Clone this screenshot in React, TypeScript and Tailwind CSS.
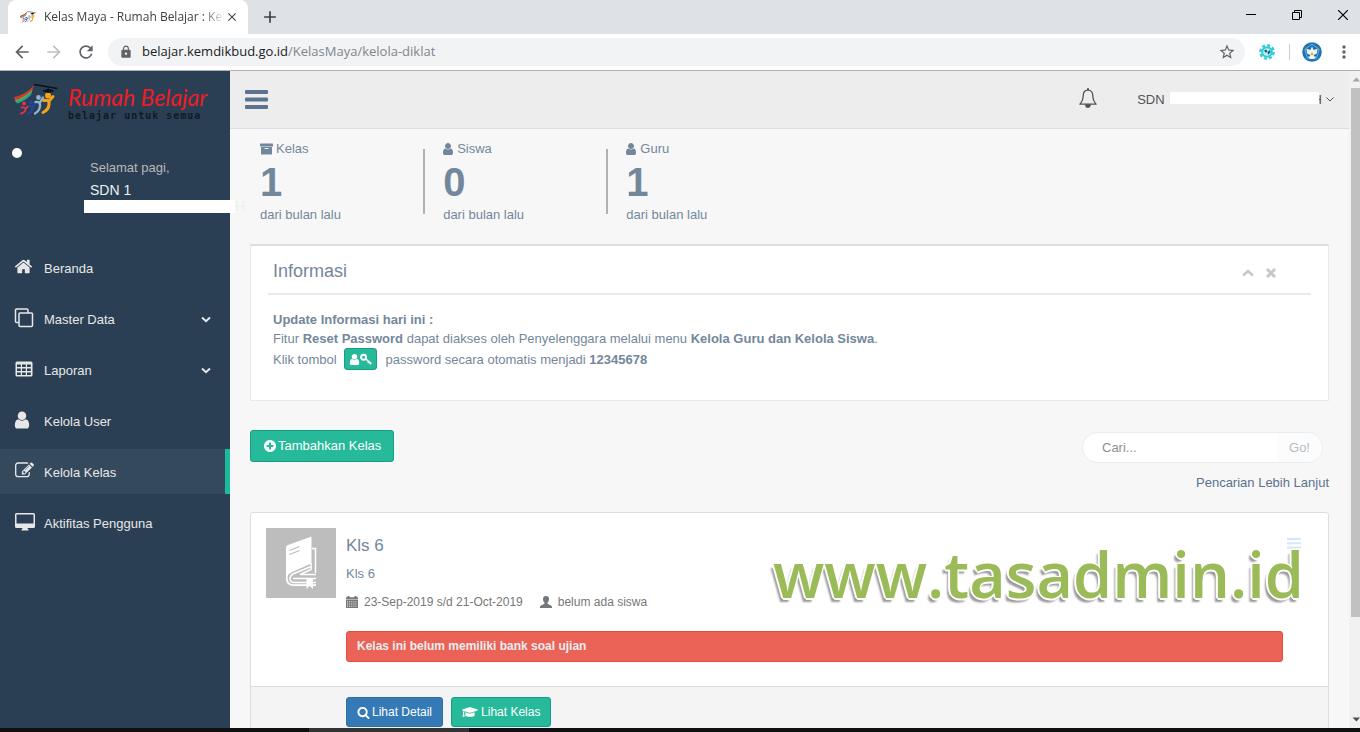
import React from "react";
import { FaGraduationCap } from "react-icons/fa";
import { MdArrowBack, MdArrowForward, MdRefresh, MdLock, MdStarBorder, MdClose, MdAdd, MdMoreVert } from "react-icons/md";

type IconProps = { className?: string };

const Fa = ({ d, className }: { d: string; className?: string }) => (
  <svg viewBox="0 0 1792 1792" fill="currentColor" aria-hidden="true" className={className}>
    <path d={d} />
  </svg>
);

const HOME =
  "M1472 992v480q0 26-19 45t-45 19h-384v-384h-256v384h-384q-26 0-45-19t-19-45v-480q0-1 .5-3t.5-3l575-474 575 474q1 2 1 6zm223-69l-62 74q-8 9-21 11h-3q-13 0-21-7l-692-577-692 577q-12 8-24 7-13-2-21-11l-62-74q-8-10-7-23.5t11-21.5l719-599q32-26 76-26t76 26l244 204v-195q0-14 9-23t23-9h192q14 0 23 9t9 23v408l219 182q10 8 11 21.5t-7 23.5z";
const USER =
  "M1536 1399q0 109-62.500 187t-150.500 78h-854q-88 0-150.500-78t-62.500-187q0-85 8.500-160.500t31.500-152 58.500-131 94-89 134.500-34.500q131 128 313 128t313-128q76 0 134.500 34.500t94 89 58.500 131 31.500 152 8.500 160.500zm-256-887q0 159-112.500 271.500t-271.500 112.500-271.500-112.500-112.500-271.500 112.500-271.500 271.500-112.500 271.500 112.500 112.500 271.500z";
const PLUS =
  "M1344 960v-128q0-26-19-45t-45-19h-256v-256q0-26-19-45t-45-19h-128q-26 0-45 19t-19 45v256h-256q-26 0-45 19t-19 45v128q0 26 19 45t45 19h256v256q0 26 19 45t45 19h128q26 0 45-19t19-45v-256h256q26 0 45-19t19-45zm320-64q0 209-103 385.500t-279.500 279.500-385.500 103-385.500-103-279.500-279.500-103-385.500 103-385.500 279.500-279.500 385.500-103 385.500 103 279.500 279.500 103 385.500z";
const EDIT =
  "M888 1184l116-116-152-152-116 116v56h96v96h56zm440-720q-16-16-33 1l-350 350q-17 17-1 33t33-1l350-350q17-17 1-33zm80 594v190q0 119-84.500 203.500t-203.500 84.500h-832q-119 0-203.500-84.500t-84.500-203.500v-832q0-119 84.500-203.500t203.500-84.500h832q63 0 117 25 15 7 18 23 3 17-9 29l-49 49q-14 14-32 8-23-6-45-6h-832q-66 0-113 47t-47 113v832q0 66 47 113t113 47h832q66 0 113-47t47-113v-126q0-13 9-22l64-64q15-15 35-7t20 29zm-96-738l288 288-672 672h-288v-288zm444 132l-92 92-288-288 92-92q28-28 68-28t68 28l152 152q28 28 28 68t-28 68z";
const SEARCH =
  "M1216 832q0-185-131.500-316.500t-316.500-131.500-316.500 131.500-131.500 316.500 131.500 316.500 316.500 131.500 316.500-131.500 131.500-316.500zm512 832q0 52-38 90t-90 38q-54 0-90-38l-343-342q-179 124-399 124-143 0-273.500-55.500t-225-150-150-225-55.500-273.500 55.500-273.500 150-225 225-150 273.500-55.500 273.500 55.500 225 150 150 225 55.500 273.500q0 220-124 399l343 343q37 37 37 90z";

const HomeIcon = () => <Fa d={HOME} className="-ml-px size-[19px]" />;
const UserMenuIcon = () => <Fa d={USER} className="-ml-[3px] size-5" />;
const EditIcon = () => <Fa d={EDIT} className="size-[19px]" />;

const CloneIcon = () => (
  <svg viewBox="0 0 20 20" fill="none" stroke="currentColor" strokeWidth="1.500" className="-ml-px size-5" aria-hidden="true">
    <rect x="5" y="5" width="13.500" height="13.500" rx="1" />
    <path d="M5 14.500H2.500A1 1 0 0 1 1.500 13.500V2A1 1 0 0 1 2.500 1H13A1 1 0 0 1 14 2V5" />
  </svg>
);

const TableIcon = () => (
  <svg viewBox="0 0 18 16" className="h-4 w-[18px]" aria-hidden="true">
    <rect x="0.500" y="0.500" width="17" height="15" rx="1.500" fill="currentColor" />
    <g fill="#2a3f54">
      {[3.5, 7.5, 11.5].map((y) => [2, 7, 12].map((x) => <rect key={`${x}-${y}`} x={x} y={y} width="3.800" height="2.500" />))}
    </g>
  </svg>
);

const DesktopIcon = () => (
  <svg viewBox="0 0 20 18" className="h-[18px] w-5" aria-hidden="true">
    <path
      fill="currentColor"
      fillRule="evenodd"
      d="M1.500 0h17A1.500 1.500 0 0 1 20 1.500v12a1.500 1.500 0 0 1-1.500 1.500H12.500q0 1 1 1.600V17.500H6.500V16.600q1-.6 1-1.600H1.500A1.500 1.500 0 0 1 0 13.500v-12A1.500 1.500 0 0 1 1.500 0zM1.500 1.500v9h17v-9z"
    />
  </svg>
);

const ArchiveIcon = () => (
  <svg viewBox="0 0 13 12" className="mr-[3px] h-3 w-[13px]" fill="currentColor" aria-hidden="true">
    <rect x="0" y="0.500" width="13" height="3" rx="0.500" />
    <path fillRule="evenodd" d="M1 4h11v7a.5.5 0 0 1-.5.5h-10A.5.5 0 0 1 1 11zM5 5a.5.5 0 0 0 0 1h3a.5.5 0 0 0 0-1z" />
  </svg>
);

const Chevron = ({ className }: IconProps) => (
  <svg viewBox="0 0 12 8" fill="none" stroke="currentColor" strokeWidth="2.400" className={className} aria-hidden="true">
    <path d="M1.200 1.500L6 6l4.800-4.500" />
  </svg>
);

const BarsIcon = () => (
  <svg viewBox="0 0 23 19" className="h-[19px] w-[23px]" fill="currentColor" aria-hidden="true">
    <rect y="0" width="23" height="4" rx="1" />
    <rect y="7.500" width="23" height="4" rx="1" />
    <rect y="15" width="23" height="4" rx="1" />
  </svg>
);

const BellIcon = () => (
  <svg viewBox="0 0 18 20" className="h-5 w-[18px]" fill="none" stroke="currentColor" strokeWidth="1.300" aria-hidden="true">
    <path d="M9 2.200C5.600 2.200 4.200 5 4.200 8c0 5-1.700 6.300-3.300 8.200h16.200C15.500 14.300 13.800 13 13.800 8c0-3-1.400-5.800-4.800-5.800z" strokeLinejoin="round" />
    <path d="M9 .3v2" strokeWidth="2" />
    <path d="M6.800 17a2.200 2.200 0 0 0 4.400 0z" fill="currentColor" />
  </svg>
);

const KeyIcon = () => (
  <svg viewBox="0 0 12 12" className="size-3" fill="none" stroke="currentColor" aria-hidden="true">
    <circle cx="3.600" cy="4.200" r="2.500" strokeWidth="1.900" />
    <path d="M5.600 5.800l5 4.200M7.800 9.900l1.600-1.900M9.800 11.300l1.500-1.700" strokeWidth="1.600" />
  </svg>
);

const CalendarIcon = () => (
  <svg viewBox="0 0 12 12" className="size-3" aria-hidden="true">
    <path fill="currentColor" d="M0 1.200h1.500V0h2v1.200h5V0h2v1.200H12v2.200H0zM0 4h12v8H0z" />
    <g fill="#fff" fillOpacity=".8">
      {[5.2, 7.4, 9.6].map((y) => [1, 3.1, 5.2, 7.3, 9.4].map((x) => <rect key={`${x}-${y}`} x={x} y={y} width="1.100" height="1.100" />))}
    </g>
  </svg>
);

const BustIcon = () => (
  <svg viewBox="0 0 12 12" className="size-3" fill="currentColor" aria-hidden="true">
    <path d="M6 0c2 0 3 1.300 3 3.100C9 4.800 8.300 6 7.500 6.700v1C8.500 8.500 12 9.200 12 10.800V12H0v-1.200C0 9.200 3.500 8.500 4.500 7.700v-1C3.700 6 3 4.800 3 3.100 3 1.300 4 0 6 0z" />
  </svg>
);

const BookThumb = () => (
  <svg viewBox="0 0 70 70" className="size-[70px] shrink-0 bg-[#bdbdbd]" aria-hidden="true">
    <path fill="#fff" d="M20 19Q20 18 22 17L45.500 8.500V35.500L26 44Q21 46.500 20 51z" />
    <path d="M23.500 22.500l10-4M23.500 26.500l10-4" stroke="#bdbdbd" strokeWidth="1.300" fill="none" />
    <path d="M46 20.500H49.500V45" stroke="#fff" strokeWidth="1.500" fill="none" />
    <path d="M20.800 45V51Q21 57 28 57.200H50" stroke="#fff" strokeWidth="1.800" fill="none" />
    <path d="M45 38.500L28 45.500Q23.500 47.500 24 51.500Q24.500 54.500 28 54.500H50" stroke="#fff" strokeWidth="1.500" fill="none" />
    <path d="M45 41.500L34 46.500H50M27 50.500H50" stroke="#fff" strokeWidth="1.500" fill="none" />
    <path d="M45.200 35V42" stroke="#fff" strokeWidth="1.300" />
    <path d="M40.500 50.500H47V61L43.700 57.800L40.500 61z" fill="#fff" />
  </svg>
);

const LogoMark = ({ className }: IconProps) => (
  <svg viewBox="0 0 44 34" className={className} aria-hidden="true">
    <path d="M0 14Q12 12 20 2L18.500 7Q10 16 1 17.500z" fill="#d9382c" />
    <path d="M1 17Q10 15 18.500 6.500L17.800 9.500Q10 18 2 19.500z" fill="#4caf50" />
    <path d="M2 19.500Q10 17.500 17.800 9.500L17 12Q11 18 3.500 20.500z" fill="#2a9bb5" />
    <g fill="none" strokeLinecap="round">
      <g stroke="#dc3545">
        <circle cx="10" cy="20.500" r="1" strokeWidth="2" />
        <path d="M7.500 24.500q4-.5 4 2t-4.500 4M11.500 25.500l3-2.500" strokeWidth="1.900" />
      </g>
      <g stroke="#27439c">
        <circle cx="17" cy="19" r="1.100" strokeWidth="2" />
        <path d="M15 23q4 0 3.500 3t-4.500 4.500M18.500 24l3-4" strokeWidth="2.200" />
      </g>
      <g stroke="#8fb4cf">
        <circle cx="24.500" cy="14.500" r="1.200" strokeWidth="2.400" />
        <path d="M21.500 19q5-1 4.500 4t-5 7.500M26 19.500l3-5" strokeWidth="2.400" />
      </g>
      <g stroke="#f5a31a">
        <circle cx="34" cy="12.500" r="1.500" strokeWidth="3" />
        <path d="M29.500 17.500q6-1.500 5.500 4t-6 8M35 18l4-4.500" strokeWidth="3" />
      </g>
    </g>
    <path d="M28 8l6.500-2.500 6 2.500-6 2z" fill="#0b1117" />
    <path d="M20 1.500L43.500 5.500" stroke="#0b1117" strokeWidth="1.300" />
  </svg>
);

const GearBadge = () => (
  <svg viewBox="0 0 16 16" className="size-4" aria-hidden="true">
    <circle cx="8" cy="8" r="6.700" fill="none" stroke="#2accd8" strokeWidth="2.400" strokeDasharray="3 2.260" />
    <circle cx="8" cy="8" r="5.800" fill="#2accd8" />
    <circle cx="8" cy="8" r="3.800" fill="#bfeef2" />
    <path d="M5 6.500l2-1 1.500 1.500L7 9zM8.500 8l2.500-2 .5 2.500-2.500 2.300z" fill="#15607a" />
  </svg>
);

const ProfileBadge = () => (
  <svg viewBox="0 0 20 20" className="size-5" aria-hidden="true">
    <circle cx="10" cy="10" r="9.800" fill="#1b75b4" />
    <path d="M10 2.200l7.200 5-2.600 9H5.400l-2.600-9z" fill="none" stroke="#9bc9e8" strokeWidth=".7" />
    <path d="M10 4.500l1.600 3.500 4-1.200-.8 4.700-3 1.600.4 3.400H7.800l.4-3.400-3-1.600-.8-4.700 4 1.200z" fill="#f3f3ee" />
    <path d="M6 14.500h8l-1.500 2.200h-5z" fill="#fff" />
    <circle cx="10" cy="12" r="1.200" fill="#d8a93a" />
  </svg>
);

function BrowserChrome() {
  return (
    <header className="shrink-0 font-['Open_Sans',sans-serif]">
      <div className="flex h-[34px] items-stretch justify-between bg-[#dee1e6]">
        <div className="flex">
          <div className="ml-2 flex w-60 items-center rounded-t-lg bg-white pl-3 pr-2">
            <LogoMark className="h-3.5 w-4 shrink-0" />
            <span className="ml-2 whitespace-nowrap text-xs text-[#3c4043] [mask-image:linear-gradient(to_right,black_88%,transparent)]">
              Kelas Maya - Rumah Belajar : Kel
            </span>
            <button aria-label="Tutup tab" className="text-[#45494d]">
              <MdClose size={14} />
            </button>
          </div>
          <button aria-label="Tab baru" className="ml-3 text-[#3c4043]">
            <MdAdd size={20} />
          </button>
        </div>
        <div className="flex items-center gap-[36px] pb-1 pr-3 text-black">
          <button aria-label="Perkecil">
            <svg viewBox="0 0 10 10" className="size-2.5" stroke="currentColor"><path d="M0 4.500h10" /></svg>
          </button>
          <button aria-label="Pulihkan">
            <svg viewBox="0 0 10 10" className="size-2.5" stroke="currentColor" fill="none"><path d="M.5 2.500h7v7h-7zM2.500 2.500v-2h7v7h-2" /></svg>
          </button>
          <button aria-label="Tutup">
            <svg viewBox="0 0 10 10" className="size-2.5" stroke="currentColor" strokeWidth="1.200"><path d="M0 0l10 10M10 0L0 10" /></svg>
          </button>
        </div>
      </div>
      <div className="flex h-[37px] items-center border-b border-[#b1b1b1] bg-white pl-3 pr-1.5 text-[#5f6368]">
        <button aria-label="Kembali"><MdArrowBack size={20} /></button>
        <button aria-label="Maju" className="ml-3 text-[#bdc1c6]"><MdArrowForward size={20} /></button>
        <button aria-label="Muat ulang" className="ml-3"><MdRefresh size={20} /></button>
        <div className="ml-3 flex h-7 flex-1 items-center rounded-full bg-[#f1f3f4] pl-[11px] pr-[9px]">
          <MdLock size={14} className="shrink-0" />
          <p className="ml-[9px] flex-1 text-[13px] text-[#80868b]">
            <span className="text-[#202124]">belajar.kemdikbud.go.id</span>/KelasMaya/kelola-diklat
          </p>
          <button aria-label="Tandai halaman"><MdStarBorder size={18} /></button>
        </div>
        <div className="ml-3.5 flex items-center">
          <GearBadge />
          <span className="ml-3.5 h-4 w-px bg-[#ccced2]" />
          <span className="ml-3"><ProfileBadge /></span>
          <button aria-label="Menu" className="ml-3"><MdMoreVert size={20} /></button>
        </div>
      </div>
    </header>
  );
}

const menu = [
  { label: "Beranda", Icon: HomeIcon },
  { label: "Master Data", Icon: CloneIcon, expandable: true },
  { label: "Laporan", Icon: TableIcon, expandable: true },
  { label: "Kelola User", Icon: UserMenuIcon },
  { label: "Kelola Kelas", Icon: EditIcon, active: true },
  { label: "Aktifitas Pengguna", Icon: DesktopIcon },
];

function Sidebar() {
  return (
    <aside className="w-[230px] shrink-0 bg-[#2a3f54]">
      <a href="#" className="flex h-[57px] items-start pl-3.5 pt-3">
        <LogoMark className="h-[34px] w-11 shrink-0" />
        <span className="ml-2.5 block whitespace-nowrap">
          <span className="block font-['Lato',cursive] text-[23px] italic leading-7 text-[#ee1c25]">Rumah Belajar</span>
          <span className="block font-['DejaVu_Sans_Mono',monospace] text-[10px] font-bold leading-[10px] tracking-widest text-[#0f1a26]">
            belajar untuk semua
          </span>
        </span>
      </a>
      <div className="flex h-[117px] pl-3 pt-5">
        <span className="size-2.5 shrink-0 rounded-full bg-white" />
        <div className="relative ml-[62px] pl-1.5 pt-[11px]">
          <p className="leading-[18px] text-[#bab8b8]">Selamat pagi,</p>
          <p className="mt-1 text-sm leading-[18px] text-[#ecf0f1]">SDN 1</p>
          <div className="absolute left-0 top-[52px] z-10 flex items-center text-sm leading-[13px] text-[#ecf0f1]">
            <span className="h-[13px] w-[151px] bg-white" />H
          </div>
        </div>
      </div>
      <nav className="flex flex-col gap-1.5 text-[#e7e7e7]">
        {menu.map(({ label, Icon, expandable, active }) => (
          <a
            key={label}
            href="#"
            className={
              active
                ? "flex h-[45px] items-center border-r-[5px] border-[#1abb9c] bg-[#35495d] pl-[15px] pr-3.5 pt-0.5"
                : "flex h-[45px] items-center pl-[15px] pr-[19px] pt-0.5"
            }
          >
            <span className="flex w-[29px] pb-1"><Icon /></span>
            <span className="flex-1">{label}</span>
            {expandable && <Chevron className="h-[7px] w-2.5" />}
          </a>
        ))}
      </nav>
    </aside>
  );
}

const stats = [
  { label: "Kelas", value: 1, icon: <ArchiveIcon /> },
  { label: "Siswa", value: 0, icon: <Fa d={USER} className="-ml-0.5 mr-0.5 size-3.5" /> },
  { label: "Guru", value: 1, icon: <Fa d={USER} className="-ml-0.5 mr-0.5 size-3.5" /> },
];

function Topbar() {
  return (
    <div className="flex h-[58px] shrink-0 items-center justify-between border-b border-[#d9dee4] bg-[#ededed] pl-[15px] pr-[15px]">
      <button aria-label="Buka menu" className="text-[#5a738e]"><BarsIcon /></button>
      <div className="flex items-center text-[#515356]">
        <button aria-label="Notifikasi" className="mb-1 mr-10"><BellIcon /></button>
        <button className="flex items-center">
          SDN
          <span className="z-10 mb-[3px] ml-[5px] mr-[-6px] h-3 w-[149px] bg-white" />
          H
          <svg viewBox="0 0 8 5" className="ml-1 h-[5px] w-2" fill="none" stroke="currentColor" aria-hidden="true">
            <path d="M.5.500L4 4 7.500.500" />
          </svg>
        </button>
      </div>
    </div>
  );
}

function InfoPanel() {
  return (
    <section className="mt-5 h-[157px] border border-t-2 border-[#e6e9ed] border-t-[#dcdee0] bg-white px-[17px] pt-2">
      <div className="flex h-[41px] items-center justify-between border-b-2 border-[#e6e9ed] pb-1.5 pl-[5px] pr-[35px]">
        <h2 className="text-lg">Informasi</h2>
        <div className="flex items-center gap-3 pt-1 text-[#c5c7cb]">
          <button aria-label="Lipat"><Chevron className="h-2 w-3 rotate-180" /></button>
          <button aria-label="Tutup panel">
            <svg viewBox="0 0 10 10" className="size-2.5" stroke="currentColor" strokeWidth="3" aria-hidden="true"><path d="M1 1l8 8M9 1L1 9" /></svg>
          </button>
        </div>
      </div>
      <div className="px-[5px] pt-[15px] leading-[19px]">
        <p className="font-bold">Update Informasi hari ini :</p>
        <p>
          Fitur <b>Reset Password</b> dapat diakses oleh Penyelenggara melalui menu <b>Kelola Guru dan Kelola Siswa</b>.
        </p>
        <div className="flex items-center">
          Klik tombol
          <button aria-label="Reset password" className="ml-[7px] mr-[9px] flex h-[22px] w-[33px] items-center justify-center rounded-[3px] border border-[#169f85] bg-[#26b99a] text-white">
            <Fa d={USER} className="-ml-px -mr-px size-[13px]" />
            <KeyIcon />
          </button>
          <span>password secara otomatis menjadi <b>12345678</b></span>
        </div>
      </div>
    </section>
  );
}

function ClassCard() {
  return (
    <article className="relative mt-5 rounded-t-[3px] border border-[#ddd] bg-white">
      <div className="flex h-[173px] pl-[15px] pr-[45px] pt-[15px]">
        <BookThumb />
        <div className="ml-2.5 flex-1">
          <h3 className="pt-[9px] text-[17px] leading-[18px]">Kls 6</h3>
          <p className="mt-2.5 leading-[18px]">Kls 6</p>
          <p className="mt-2.5 flex items-center text-xs leading-[18px] text-[#777]">
            <CalendarIcon />
            <span className="ml-1.5">23-Sep-2019 s/d 21-Oct-2019</span>
            <span className="ml-[17px]"><BustIcon /></span>
            <span className="ml-1.5">belum ada siswa</span>
          </p>
          <div role="alert" className="mt-5 h-[31px] rounded-[3px] border border-[#e74c3c] bg-[#eb6357] px-2.5 text-xs font-bold leading-[29px] text-[#e9edef]">
            Kelas ini belum memiliki bank soal ujian
          </div>
        </div>
      </div>
      <div className="flex gap-2 border-t border-[#ddd] bg-[#f4f4f4] py-2.5 pl-[95px] text-xs text-white">
        <button className="flex h-[30px] items-center rounded-[3px] border border-[#2e6da4] bg-[#337ab7] px-2.5">
          <Fa d={SEARCH} className="mr-0.5 size-[13px]" />
          Lihat Detail
        </button>
        <button className="flex h-[30px] items-center rounded-[3px] border border-[#169f85] bg-[#26b99a] px-2.5">
          <FaGraduationCap size={16} className="mr-[3px]" />
          Lihat Kelas
        </button>
      </div>
      <button aria-label="Opsi kelas" className="absolute right-[27px] top-[25px] text-[#d5e8fb]">
        <svg viewBox="0 0 14 11" className="h-[11px] w-3.5" fill="currentColor" aria-hidden="true">
          <path d="M0 0h14v2H0zM0 4.300h14v2H0zM0 8.600h14v2H0z" />
        </svg>
      </button>
      <p className="absolute right-6 top-[26px] font-['Open_Sans',sans-serif] text-[63px] font-semibold leading-[70px] text-[#9bbb59] [text-shadow:1px_1px_0_#fff,-1px_1px_0_#fff,1px_-1px_0_#fff,-1px_-1px_0_#fff,-2px_0_0_#fff,0_2px_0_#fff,-3px_4px_2px_rgba(0,0,0,0.4)]">
        www.tasadmin.id
      </p>
    </article>
  );
}

function Scrollbar() {
  return (
    <div className="flex w-[11px] shrink-0 flex-col items-end bg-[#f1f1f1]" aria-hidden="true">
      <svg viewBox="0 0 9 17" className="h-[17px] w-[9px]"><path d="M1.500 10.500L5.500 6.500 9 10.500z" fill="#a3a3a3" /></svg>
      <div className="w-[9px] grow-[529] bg-[#c1c1c1]" />
      <div className="grow-[94]" />
      <svg viewBox="0 0 9 17" className="h-[17px] w-[9px]"><path d="M1.500 6.500L5.500 10.500 9 6.500z" fill="#505050" /></svg>
    </div>
  );
}

export default function App() {
  return (
    <div className="flex h-screen flex-col overflow-hidden bg-[#f7f7f7] font-['Liberation_Sans',Arial,sans-serif] text-[13px] text-[#73879c]">
      <BrowserChrome />
      <div className="flex min-h-0 flex-1">
        <Sidebar />
        <div className="flex min-w-0 flex-1 flex-col overflow-hidden">
          <Topbar />
          <main className="px-5 pt-[11px]">
            <div className="-mx-2.5 grid grid-cols-6">
              {stats.map((s, i) => (
                <div key={s.label} className="flex">
                  <div className={i === 0 ? "w-0.5" : "mt-[9px] h-[65px] w-0.5 bg-[#adb2b5]"} />
                  <div className="pl-[18px]">
                    <p className="flex items-center leading-[18px]">{s.icon}{s.label}</p>
                    <p className="text-[40px] font-bold leading-[48px]">{s.value}</p>
                    <p className="leading-[18px]">dari bulan lalu</p>
                  </div>
                </div>
              ))}
            </div>
            <InfoPanel />
            <div className="mt-[29px] flex items-start justify-between">
              <button className="flex h-8 items-center rounded-[3px] border border-[#169f85] bg-[#26b99a] px-3 text-white">
                <Fa d={PLUS} className="mr-px size-[14px]" />
                Tambahkan Kelas
              </button>
              <div className="flex flex-col items-end">
                <form className="mr-1.5 mt-0.5 flex h-[31px] w-[241px] overflow-hidden rounded-full border border-[#e9ecef] bg-white" onSubmit={(e) => e.preventDefault()}>
                  <input aria-label="Cari" placeholder="Cari..." className="min-w-0 flex-1 pl-[19px] outline-none placeholder:text-[#8f8f8f]" />
                  <button className="w-[45px] bg-[#fcfcfc] text-[#b3bcc6]">Go!</button>
                </form>
                <a href="#" className="mt-[11px] leading-[18px] text-[#5a738e]">Pencarian Lebih Lanjut</a>
              </div>
            </div>
            <ClassCard />
          </main>
        </div>
        <Scrollbar />
      </div>
      <footer className="flex h-1 shrink-0 bg-[#101010]">
        <div className="ml-[309px] w-40 bg-[#333]" />
      </footer>
    </div>
  );
}
